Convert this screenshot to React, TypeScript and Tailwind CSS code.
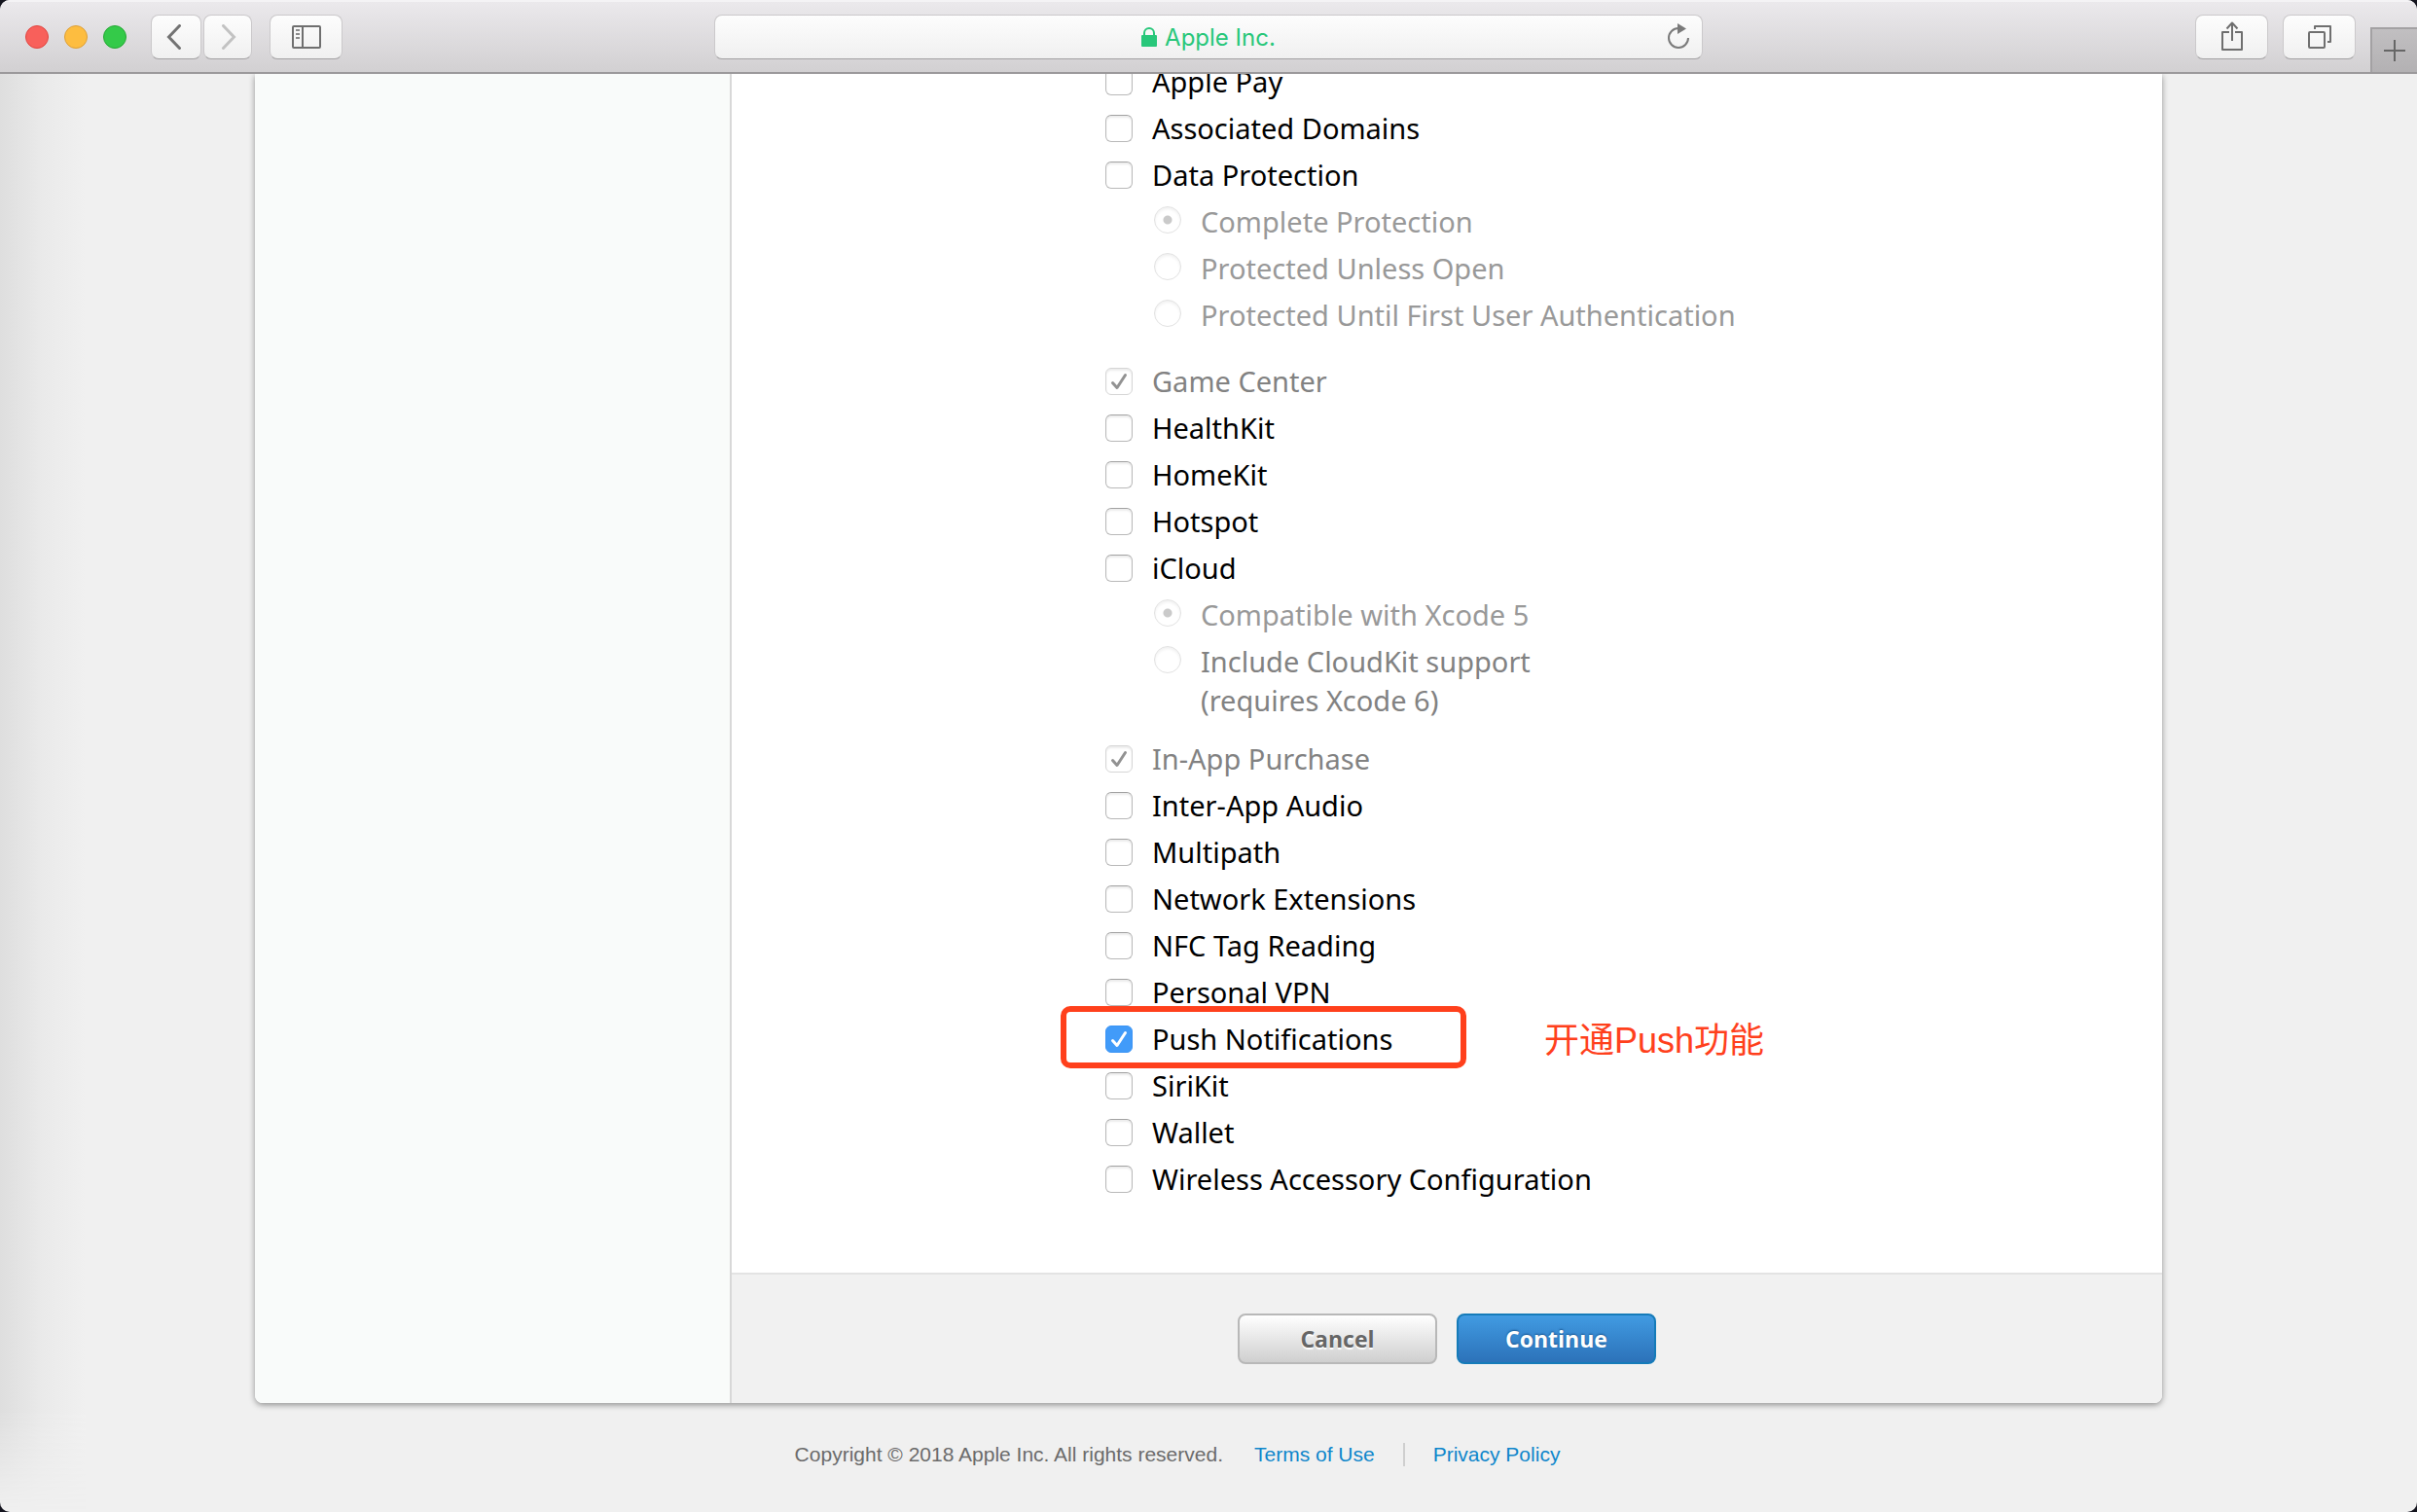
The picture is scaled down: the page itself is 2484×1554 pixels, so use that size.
import type { ReactNode } from 'react';

type Option = {
  label: string;
  note?: string;
  checked?: boolean;
};

type Service = {
  id: string;
  label: string;
  checked?: boolean;
  disabled?: boolean;
  options?: Option[];
  callout?: string;
};

const services: Service[] = [
  { id: 'apple-pay', label: 'Apple Pay' },
  { id: 'associated-domains', label: 'Associated Domains' },
  {
    id: 'data-protection',
    label: 'Data Protection',
    options: [
      { label: 'Complete Protection', checked: true },
      { label: 'Protected Unless Open' },
      { label: 'Protected Until First User Authentication' },
    ],
  },
  { id: 'game-center', label: 'Game Center', checked: true, disabled: true },
  { id: 'healthkit', label: 'HealthKit' },
  { id: 'homekit', label: 'HomeKit' },
  { id: 'hotspot', label: 'Hotspot' },
  {
    id: 'icloud',
    label: 'iCloud',
    options: [
      { label: 'Compatible with Xcode 5', checked: true },
      { label: 'Include CloudKit support', note: '(requires Xcode 6)' },
    ],
  },
  { id: 'in-app-purchase', label: 'In-App Purchase', checked: true, disabled: true },
  { id: 'inter-app-audio', label: 'Inter-App Audio' },
  { id: 'multipath', label: 'Multipath' },
  { id: 'network-extensions', label: 'Network Extensions' },
  { id: 'nfc', label: 'NFC Tag Reading' },
  { id: 'vpn', label: 'Personal VPN' },
  { id: 'push', label: 'Push Notifications', checked: true, callout: '开通Push功能' },
  { id: 'sirikit', label: 'SiriKit' },
  { id: 'wallet', label: 'Wallet' },
  { id: 'wireless', label: 'Wireless Accessory Configuration' },
];

function ToolbarButton({ label, className, children }: { label: string; className: string; children: ReactNode }) {
  return (
    <button
      type="button"
      aria-label={label}
      className={`flex h-[46px] shrink-0 items-center justify-center rounded-lg border border-[#cbc9cb] border-b-[#a3a1a3] bg-linear-to-b from-[#fdfdfd] to-[#f0f0f0] text-[#6f6f6f] ${className}`}
    >
      {children}
    </button>
  );
}

function Toolbar() {
  return (
    <header className="relative z-10 grid h-[76px] shrink-0 grid-cols-[1fr_minmax(0,1016px)_1fr] border-t-2 border-b-2 border-t-[#f4f3f5] border-b-[#9b999b] bg-linear-to-b from-[#ebe9ec] to-[#d2d0d2]">
      <div className="flex items-center pl-[26px]">
        <div className="flex gap-4">
          <button type="button" aria-label="Close" className="size-6 rounded-full border border-[#e0443f] bg-[#f8605b]" />
          <button type="button" aria-label="Minimize" className="size-6 rounded-full border border-[#dd9f36] bg-[#fdbd40]" />
          <button type="button" aria-label="Zoom" className="size-6 rounded-full border border-[#24a833] bg-[#34ca49]" />
        </div>
        <div className="ml-[25px] flex gap-0.5">
          <ToolbarButton label="Back" className="w-[52px] pr-1">
            <svg width="16" height="26" viewBox="0 0 16 26" fill="none" stroke="#737373" strokeWidth="3">
              <path d="M13.5 1.5 2.5 13l11 11.5" strokeLinecap="round" />
            </svg>
          </ToolbarButton>
          <ToolbarButton label="Forward" className="w-[50px] pl-0.5">
            <svg width="16" height="26" viewBox="0 0 16 26" fill="none" stroke="#c2c2c2" strokeWidth="3">
              <path d="M2.5 1.5 13.5 13l-11 11.5" strokeLinecap="round" />
            </svg>
          </ToolbarButton>
        </div>
        <ToolbarButton label="Show sidebar" className="ml-[18px] w-[75px]">
          <svg width="30" height="24" viewBox="0 0 30 24" fill="none" stroke="currentColor" strokeWidth="2">
            <rect x="1" y="1" width="28" height="22" rx="1" />
            <path d="M11 1v22" />
            <path d="M4 5h4M4 9h4M4 13h4" stroke="#8c8c8c" />
          </svg>
        </ToolbarButton>
      </div>

      <div className="flex items-center">
        <div className="flex h-[46px] w-full items-center rounded-lg border border-[#cbc9cb] border-b-[#a3a1a3] bg-linear-to-b from-[#fdfdfd] to-[#f0f0f0] px-3">
          <button
            type="button"
            className="flex flex-1 items-center justify-center gap-2 pt-0.5 pl-6 font-[Inter,sans-serif] text-2xl text-[#28c77a]"
          >
            <svg width="16" height="20" viewBox="0 0 16 20" className="-mt-0.5" aria-hidden>
              <rect y="8" width="16" height="12" rx="1" fill="currentColor" />
              <path d="M3 9V6a5 5 0 0 1 10 0v3" fill="none" stroke="currentColor" strokeWidth="2" />
            </svg>
            Apple Inc.
          </button>
          <button type="button" aria-label="Reload" className="shrink-0">
            <svg width="24" height="28" viewBox="0 0 24 28" fill="none" stroke="#7a7a7a" strokeWidth="2">
              <path d="M12 5A10 10 0 1 0 22 15" />
              <path d="M11 0v11l9-5.500z" fill="#7a7a7a" stroke="none" />
            </svg>
          </button>
        </div>
      </div>

      <div className="flex items-center justify-end gap-[15px]">
        <ToolbarButton label="Share" className="w-[75px]">
          <svg width="24" height="32" viewBox="0 0 24 32" fill="none" stroke="currentColor" strokeWidth="2" strokeLinejoin="round">
            <path d="M9 11H2v18h20V11h-7" />
            <path d="M12 20V1.5M6.5 7.5 12 1.5l5.5 6" />
          </svg>
        </ToolbarButton>
        <ToolbarButton label="Show all tabs" className="w-[75px]">
          <svg width="26" height="26" viewBox="0 0 26 26" fill="none" stroke="currentColor" strokeWidth="2" strokeLinejoin="round">
            <rect x="2" y="8" width="16" height="16" rx="1" />
            <path d="M8 5V2h16v16h-3" />
          </svg>
        </ToolbarButton>
        <button
          type="button"
          aria-label="New tab"
          className="flex h-[46px] w-12 items-center justify-center self-end border-t-2 border-l-2 border-[#a3a1a3] bg-linear-to-b from-[#c1bfc1] to-[#b3b1b3]"
        >
          <svg width="22" height="22" viewBox="0 0 22 22" stroke="#666" strokeWidth="2">
            <path d="M11 0v22M0 11h22" />
          </svg>
        </button>
      </div>
    </header>
  );
}

function Checkbox({ id, checked, disabled }: { id: string; checked?: boolean; disabled?: boolean }) {
  return (
    <span className="grid size-7 shrink-0">
      <input
        id={id}
        type="checkbox"
        defaultChecked={checked}
        disabled={disabled}
        className="peer col-start-1 row-start-1 size-7 appearance-none rounded-md border border-[#b9b9b9] border-t-[#a2a2a2] bg-white shadow-[inset_0_2px_2px_#ececec] enabled:checked:border-[#3b94f5] enabled:checked:bg-[#419bf9] enabled:checked:shadow-none disabled:border-[#d6d6d6]"
      />
      <svg
        viewBox="0 0 28 28"
        fill="none"
        stroke="currentColor"
        strokeWidth="3"
        strokeLinecap="round"
        strokeLinejoin="round"
        className="pointer-events-none invisible col-start-1 row-start-1 size-7 text-white peer-checked:visible peer-disabled:text-[#929292]"
      >
        <path d="m7.5 15.5 4.5 5L20.5 7.5" />
      </svg>
    </span>
  );
}

function ServiceOptions({ service }: { service: Service }) {
  return (
    <div className={`pl-[50px] text-[#999] ${service.id === 'icloud' ? 'mb-3' : 'mb-5'}`}>
      {service.options?.map((option) => (
        <label key={option.label} className="flex gap-5 py-1">
          <input
            type="radio"
            name={service.id}
            defaultChecked={option.checked}
            disabled
            className="mt-1 size-7 shrink-0 appearance-none rounded-full border border-[#e2e2e2] bg-white shadow-[inset_0_2px_3px_#f1f1f1] checked:bg-[radial-gradient(circle,#cacaca_4px,#fff_5px)]"
          />
          {option.note ? (
            <span className="text-[#828282]">
              {option.label}
              <br />
              {option.note}
            </span>
          ) : (
            <span>{option.label}</span>
          )}
        </label>
      ))}
    </div>
  );
}

function ServiceRow({ service }: { service: Service }) {
  return (
    <li>
      <div className="flex h-12 items-center">
        <div className={`relative flex items-center gap-5 ${service.callout ? 'w-[371px]' : ''}`}>
          <Checkbox id={service.id} checked={service.checked} disabled={service.disabled} />
          <label htmlFor={service.id} className={service.disabled ? 'text-[#828282]' : 'text-black'}>
            {service.label}
          </label>
          {service.callout && (
            <span className="pointer-events-none absolute -top-[14px] right-0 -bottom-[10px] -left-[46px] rounded-[10px] border-6 border-[#ff401c]" />
          )}
        </div>
        {service.callout && (
          <span className="ml-20 pt-1 font-['Liberation_Sans','Noto_Sans_CJK_SC',sans-serif] text-4xl text-[#ff401c]">
            {service.callout}
          </span>
        )}
      </div>
      {service.options && <ServiceOptions service={service} />}
    </li>
  );
}

export default function App() {
  return (
    <div className="min-h-screen bg-[#15151f]">
      <div className="flex min-h-screen flex-col overflow-hidden rounded-[10px] bg-[#f0f0f0]">
        <Toolbar />
        <div className="relative flex-1 overflow-hidden">
          <div className="pointer-events-none absolute inset-y-0 left-0 w-[88px] bg-linear-to-r from-[#dedede] via-[#eaeaea] to-[#f0f0f0] [mask-image:linear-gradient(to_bottom,black_93%,transparent)]" />

          <main className="mx-auto flex max-w-[1960px] overflow-hidden rounded-b-lg bg-white shadow-[0_2px_6px_rgba(0,0,0,0.4)]">
            <aside className="w-1/4 max-w-[490px] shrink-0 border-r-2 border-[#d8d8d8] bg-[#f9fbfa]" />
            <form className="min-w-0 flex-1" onSubmit={(e) => e.preventDefault()}>
              {/* first row is scrolled partly under the toolbar */}
              <ul className="-mt-4 pb-[72px] pl-96 font-['Noto_Sans',sans-serif] text-[29px] leading-10">
                {services.map((service) => (
                  <ServiceRow key={service.id} service={service} />
                ))}
              </ul>
              <div className="flex justify-center gap-5 border-t-2 border-[#e3e3e3] bg-[#f1f1f1] py-10 font-['Open_Sans',sans-serif] text-[23px] font-bold">
                <button
                  type="button"
                  className="h-[52px] w-[205px] rounded-lg border-2 border-[#b8b8b8] bg-linear-to-b from-white to-[#cfcfcf] text-[#666] [text-shadow:0_2px_1px_#fff]"
                >
                  Cancel
                </button>
                <button
                  type="submit"
                  className="h-[52px] w-[205px] rounded-lg border-2 border-[#157bb9] bg-linear-to-b from-[#419be2] to-[#2c72b9] text-white [text-shadow:0_-1px_2px_#1c5a95]"
                >
                  Continue
                </button>
              </div>
            </form>
          </main>

          <footer className="flex items-center justify-center pt-[39px] pr-16 font-['Liberation_Sans',sans-serif] text-[21px] leading-7 text-[#6b6b6b]">
            <p>Copyright © 2018 Apple Inc. All rights reserved.</p>
            <a href="#terms" className="ml-8 text-[#0e86cb]">
              Terms of Use
            </a>
            <span className="mx-[29px] h-6 w-0.5 bg-[#cfcfcf]" />
            <a href="#privacy" className="text-[#0e86cb]">
              Privacy Policy
            </a>
          </footer>
        </div>
      </div>
    </div>
  );
}
